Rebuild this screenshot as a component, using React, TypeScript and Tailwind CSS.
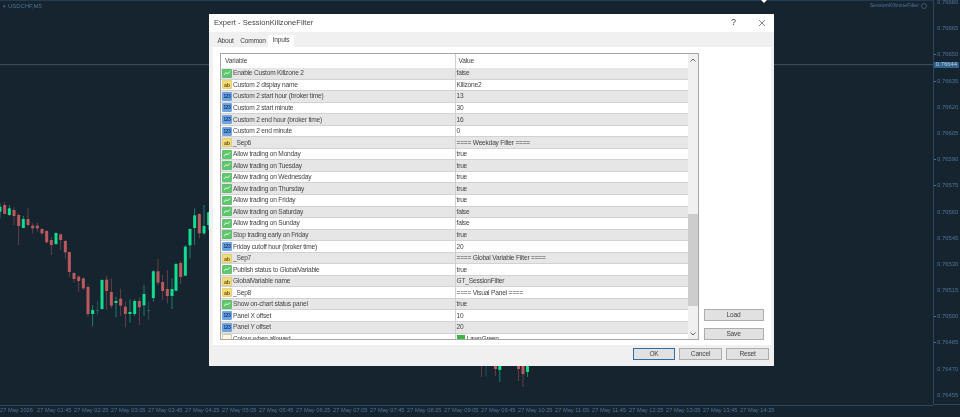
const FONT = "font-['Liberation_Sans',Arial,sans-serif]";

type Kind = "b" | "s" | "i" | "c";
const rows: [string, string, Kind][] = [
  ["Enable Custom Killzone 2", "false", "b"],
  ["Custom 2 display name", "Killzone2", "s"],
  ["Custom 2 start hour (broker time)", "13", "i"],
  ["Custom 2 start minute", "30", "i"],
  ["Custom 2 end hour (broker time)", "16", "i"],
  ["Custom 2 end minute", "0", "i"],
  ["_Sep6", "==== Weekday Filter ====", "s"],
  ["Allow trading on Monday", "true", "b"],
  ["Allow trading on Tuesday", "true", "b"],
  ["Allow trading on Wednesday", "true", "b"],
  ["Allow trading on Thursday", "true", "b"],
  ["Allow trading on Friday", "true", "b"],
  ["Allow trading on Saturday", "false", "b"],
  ["Allow trading on Sunday", "false", "b"],
  ["Stop trading early on Friday", "true", "b"],
  ["Friday cutoff hour (broker time)", "20", "i"],
  ["_Sep7", "==== Global Variable Filter ====", "s"],
  ["Publish status to GlobalVariable", "true", "b"],
  ["GlobalVariable name", "GT_SessionFilter", "s"],
  ["_Sep8", "==== Visual Panel ====", "s"],
  ["Show on-chart status panel", "true", "b"],
  ["Panel X offset", "10", "i"],
  ["Panel Y offset", "20", "i"],
  ["Colour when allowed", "LawnGreen", "c"],
];

// x index, wick top, wick bottom, body top, body bottom, colour (zoomed coordinates)
const candles: [number, number, number, number, number, "r" | "g" | "d"][] = [
  [0, 40, 85, 50, 65, "g"], [14, 35, 72, 45, 72, "r"], [28, 45, 78, 55, 75, "g"], [42, 52, 105, 60, 78, "r"],
  [56, 70, 165, 75, 108, "r"], [70, 78, 115, 87, 114, "g"], [84, 55, 110, 87, 105, "r"], [98, 100, 130, 107, 115, "r"],
  [112, 97, 125, 107, 115, "r"], [126, 115, 135, 117, 130, "r"], [140, 120, 160, 123, 157, "r"], [154, 140, 195, 150, 165, "r"],
  [168, 127, 165, 129, 162, "g"], [182, 130, 180, 133, 150, "r"], [196, 150, 205, 153, 187, "r"], [208, 185, 262, 186, 246, "r"],
  [222, 245, 278, 249, 267, "r"], [236, 255, 305, 260, 273, "r"], [250, 262, 300, 265, 295, "r"], [264, 285, 380, 291, 372, "r"],
  [278, 345, 408, 360, 372, "g"], [292, 332, 375, 360, 362, "d"], [306, 268, 360, 270, 357, "g"], [320, 258, 360, 269, 303, "r"],
  [334, 265, 355, 306, 347, "r"], [348, 320, 382, 333, 339, "g"], [362, 296, 378, 326, 347, "r"], [376, 335, 412, 350, 372, "r"],
  [390, 328, 398, 366, 372, "g"], [404, 328, 378, 333, 372, "g"], [418, 322, 405, 333, 352, "r"], [432, 285, 378, 312, 346, "g"],
  [446, 335, 390, 360, 361, "d"], [460, 240, 335, 244, 324, "g"], [474, 207, 285, 244, 278, "r"], [488, 255, 330, 276, 303, "r"],
  [502, 240, 340, 297, 318, "r"], [516, 265, 357, 297, 318, "g"], [528, 218, 305, 222, 302, "g"], [542, 212, 282, 219, 261, "r"],
  [556, 165, 258, 170, 257, "g"], [570, 115, 205, 117, 166, "g"], [584, 55, 165, 76, 114, "g"], [598, 70, 145, 72, 130, "r"],
  [612, 45, 135, 108, 130, "g"], [626, 65, 120, 67, 105, "g"],
];
// candles showing below the dialog, in page pixels
const lower: [number, number, number, number, number, "r" | "g" | "d"][] = [
  [481.5, 360, 377, 360, 362, "r"], [486, 360, 376, 360, 362, "d"], [495.5, 360, 376, 360, 369, "r"],
  [499.8, 360, 382, 360, 370, "g"], [518.5, 360, 381, 360, 369, "r"], [523, 360, 387, 360, 374, "r"], [527.5, 360, 377, 360, 372, "g"],
];
const BODY = { r: "#bb5a5c", g: "#12dc90", d: "#2f6f70" };
const WICK = { r: "#74464e", g: "#169a78", d: "#2a5a68" };

const times = ["27 May 2026", "27 May 01:45", "27 May 02:25", "27 May 03:05", "27 May 03:45", "27 May 04:25", "27 May 05:05", "27 May 05:45", "27 May 06:25", "27 May 07:05", "27 May 07:45", "27 May 08:25", "27 May 09:05", "27 May 09:45", "27 May 10:25", "27 May 11:05", "27 May 11:45", "27 May 12:25", "27 May 13:05", "27 May 13:45", "27 May 14:25"];
const prices = ["0.76680", "0.76665", "0.76650", "0.76635", "0.76620", "0.76605", "0.76590", "0.76575", "0.76560", "0.76545", "0.76530", "0.76515", "0.76500", "0.76485", "0.76470", "0.76455"];
const ticked = [2, 3, 6, 7, 12, 13];

function Candle({ x, wt, wb, bt, bb, c }: { x: number; wt: number; wb: number; bt: number; bb: number; c: "r" | "g" | "d" }) {
  return (
    <g>
      <rect x={x - 0.4} y={wt} width={0.8} height={wb - wt} fill={WICK[c]} />
      <rect x={x - 1.5} y={bt} width={3} height={Math.max(bb - bt, 0.8)} fill={BODY[c]} />
    </g>
  );
}

function Chart() {
  return (
    <svg className="absolute inset-0 w-[933px] h-[405px]" viewBox="0 0 933 405">
      <rect x="0" y="64" width="933" height="1.2" fill="#3a4a58" />
      {candles.map(([x, wt, wb, bt, bb, c]) => (
        <Candle key={x} x={x / 3} wt={190 + wt / 3} wb={190 + wb / 3} bt={190 + bt / 3} bb={190 + bb / 3} c={c} />
      ))}
      {lower.map(([x, wt, wb, bt, bb, c]) => (
        <Candle key={x} x={x} wt={wt} wb={wb} bt={bt} bb={bb} c={c} />
      ))}
      <polygon points="761,0 767,0 764,3" fill="#ffffff" />
    </svg>
  );
}

function Icon({ kind }: { kind: Kind }) {
  if (kind === "b")
    return (
      <svg width="10" height="9" viewBox="0 0 10 9" className="shrink-0">
        <rect x="0.3" y="0.3" width="9.4" height="8.4" rx="1" fill="#5cc96a" stroke="#3a9a48" strokeWidth="0.5" />
        <path d="M2 6 L4 3.6 L5.4 5 L8 2.4" fill="none" stroke="#eaffea" strokeWidth="1" />
      </svg>
    );
  if (kind === "s")
    return (
      <svg width="10" height="9" viewBox="0 0 10 9" className="shrink-0">
        <rect x="0.3" y="0.3" width="9.4" height="8.4" rx="1" fill="#f0dc78" stroke="#cdb548" strokeWidth="0.5" />
        <text x="5" y="6.6" fontSize="5.5" textAnchor="middle" fill="#7a5a10" fontWeight="700" fontFamily="Liberation Sans">ab</text>
      </svg>
    );
  if (kind === "i")
    return (
      <svg width="10" height="9" viewBox="0 0 10 9" className="shrink-0">
        <rect x="0.3" y="0.3" width="9.4" height="8.4" rx="1" fill="#6aa4e4" stroke="#4a84c8" strokeWidth="0.5" />
        <text x="5" y="6.4" fontSize="4.6" textAnchor="middle" fill="#10306a" fontWeight="700" fontFamily="Liberation Sans">123</text>
      </svg>
    );
  return (
    <svg width="10" height="9" viewBox="0 0 10 9" className="shrink-0">
      <rect x="0.3" y="0.3" width="9.4" height="8.4" rx="1.5" fill="#fff6e0" stroke="#b09a70" strokeWidth="0.6" />
    </svg>
  );
}

function Row({ name, value, kind, i }: { name: string; value: string; kind: Kind; i: number }) {
  return (
    <div className={`flex h-[11.55px] shrink-0 items-center border-b border-[#d2d2d2] ${i % 2 === 0 ? "bg-[#e6e6e6]" : "bg-white"}`}>
      <div className="flex w-[234px] shrink-0 items-center gap-[1.5px] overflow-hidden pl-[0.5px]">
        <Icon kind={kind} />
        <span className="whitespace-nowrap">{name}</span>
      </div>
      <div className="flex items-center gap-[2px] pl-[1.5px] whitespace-nowrap">
        {kind === "c" && <span className="h-[8px] w-[8px] bg-[#3cb544]" />}
        {value}
      </div>
    </div>
  );
}

function Btn({ label, primary }: { label: string; primary?: boolean }) {
  return (
    <div className={`flex h-[12px] items-center justify-center border bg-[#e1e1e1] text-[#444] ${primary ? "w-[42px] border-[#2d6ea6]" : "w-[43px] border-[#adadad]"}`}>
      {label}
    </div>
  );
}

function SideBtn({ label }: { label: string }) {
  return <div className="flex h-[12px] w-[60px] items-center justify-center border border-[#adadad] bg-[#e1e1e1] text-[#444]">{label}</div>;
}

function Dialog() {
  return (
    <div className="absolute left-[209px] top-[14px] flex h-[352px] w-[565px] flex-col bg-[#f0f0f0] text-[6.6px] tracking-[-0.2px] text-[#444]">
      <div className="flex h-[17.5px] shrink-0 items-center justify-between bg-white pl-[5px] pr-[8px] text-[7.6px] tracking-normal text-[#444]">
        <span>Expert - SessionKillzoneFilter</span>
        <div className="flex items-center gap-[22px]">
          <span className="text-[9px] text-[#444]">?</span>
          <svg width="8" height="8" viewBox="0 0 8 8"><path d="M1 1 L7 7 M7 1 L1 7" stroke="#777" strokeWidth="0.9" /></svg>
        </div>
      </div>
      <div className="flex h-[15px] shrink-0 items-end pl-[4px] pt-[3.5px]">
        <span className="flex h-[11px] w-[25px] items-center justify-center">About</span>
        <span className="flex h-[11px] w-[30px] items-center justify-center">Common</span>
        <span className="flex h-[11.5px] w-[26px] items-start justify-center bg-white">Inputs</span>
      </div>
      <div className="mx-[3.5px] flex h-[298px] shrink-0 bg-white pl-[7.5px] pt-[6.5px]">
        <div className="flex h-[287px] w-[479px] shrink-0 overflow-hidden border border-[#a6a6a6]">
          <div className="flex min-w-0 flex-1 flex-col overflow-hidden">
            <div className="flex h-[14px] shrink-0 items-center bg-white">
              <span className="w-[234px] shrink-0 pl-[4px]">Variable</span>
              <span className="pl-[3.5px]">Value</span>
            </div>
            <div className="relative flex flex-col">
              {rows.map(([n, v, k], i) => (
                <Row key={n} name={n} value={v} kind={k} i={i} />
              ))}
              <div className="absolute bottom-0 left-[233.5px] top-[-14px] w-px bg-[#cfcfcf]" />
            </div>
          </div>
          <div className="flex w-[10px] shrink-0 flex-col bg-[#f0f0f0]">
            <div className="flex h-[11px] items-center justify-center">
              <svg width="6" height="4" viewBox="0 0 6 4"><path d="M0.5 3.5 L3 1 L5.5 3.5" fill="none" stroke="#555" strokeWidth="0.9" /></svg>
            </div>
            <div className="mt-[149px] h-[92px] bg-[#cdcdcd]" />
            <div className="mt-auto flex h-[11px] items-center justify-center">
              <svg width="6" height="4" viewBox="0 0 6 4"><path d="M0.5 0.5 L3 3 L5.5 0.5" fill="none" stroke="#555" strokeWidth="0.9" /></svg>
            </div>
          </div>
        </div>
        <div className="ml-[4.5px] flex h-[287px] flex-col justify-end gap-[7px]">
          <SideBtn label="Load" />
          <SideBtn label="Save" />
        </div>
      </div>
      <div className="flex flex-1 items-start justify-end gap-[4px] pr-[5px] pt-[3.5px]">
        <Btn label="OK" primary />
        <Btn label="Cancel" />
        <Btn label="Reset" />
      </div>
    </div>
  );
}

export default function App() {
  return (
    <div className={`relative flex h-[417px] w-[960px] flex-col overflow-hidden bg-[#162430] text-[#4d7397] blur-[0.25px] ${FONT}`}>
      <div className="flex h-[405px] shrink-0">
        <div className="relative flex-1 border-t border-[#243a4e]">
          <div className="flex items-center justify-between pl-[3px] pr-[6px] pt-[1px] text-[5.9px]">
            <span className="flex items-center gap-[2px]">
              <span className="text-[5px]">▾</span>
              <span>USDCHF,M5</span>
            </span>
            <span className="flex items-center gap-[2px] text-[5.3px]">
              <span>SessionKillzoneFilter</span>
              <svg width="6" height="6" viewBox="0 0 6 6"><circle cx="3" cy="3" r="2.5" fill="none" stroke="#4d7397" strokeWidth="0.6" /></svg>
            </span>
          </div>
        </div>
        <div className="relative flex w-[27px] shrink-0 flex-col border-l border-b border-[#2d465c] bg-[#162430] text-[5.9px]">
          {prices.map((p, i) => (
            <div key={p} className="flex h-[26.2px] shrink-0 items-start">
              {ticked.includes(i) ? <span className="mt-[2px] h-px w-[2px] bg-[#4d7397]" /> : <span className="w-[2px]" />}
              <span className="ml-[1px] leading-[5px]">{p}</span>
            </div>
          ))}
          <div className="absolute left-0 top-[61.5px] flex h-[6.5px] w-[25px] items-center justify-center bg-[#31648f] text-[5.9px] text-[#b9cfe0]">0.76644</div>
        </div>
      </div>
      <div className="flex border-t-0 pt-[2px] text-[5.7px]">
        {times.map((t) => (
          <span key={t} className="w-[37px] shrink-0 whitespace-nowrap leading-[7px]">{t}</span>
        ))}
      </div>
      <div className="absolute left-0 top-[405px] h-px w-[933px] bg-[#2d465c]" />
      <Chart />
      <Dialog />
    </div>
  );
}
